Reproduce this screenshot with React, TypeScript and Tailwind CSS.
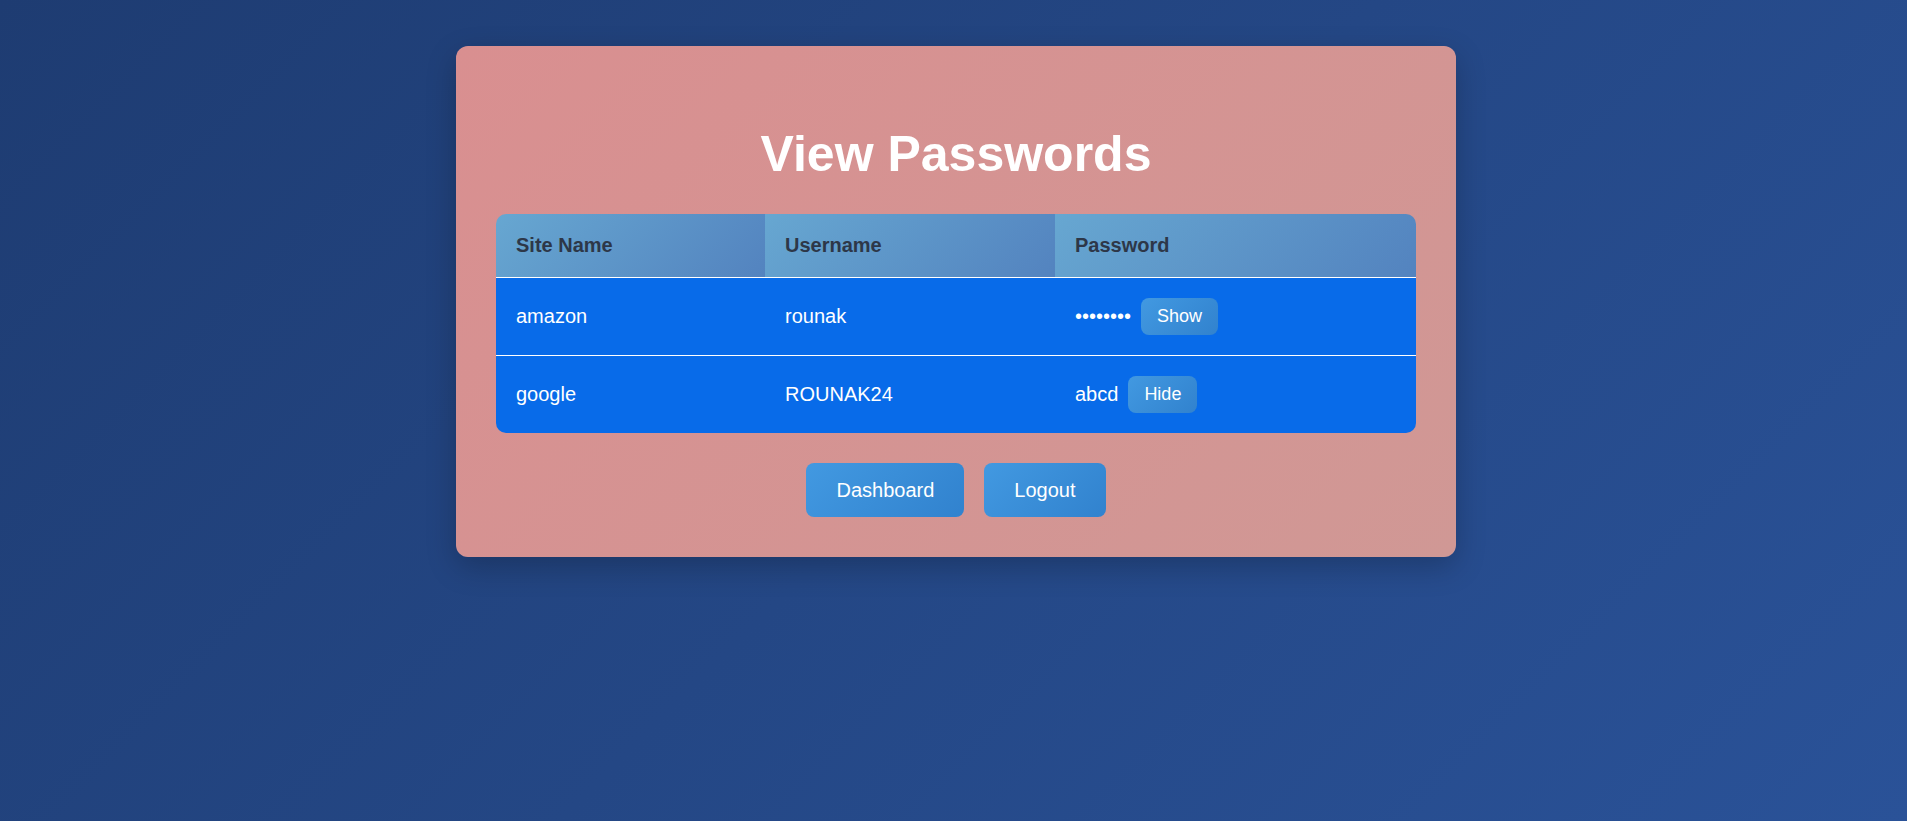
import { useState } from "react";

interface Entry {
  site: string;
  username: string;
  password: string;
}

const entries: Entry[] = [
  { site: "amazon", username: "rounak", password: "secret12" },
  { site: "google", username: "ROUNAK24", password: "abcd" },
];

export default function App() {
  const [visible, setVisible] = useState<Record<number, boolean>>({ 1: true });

  const toggle = (i: number) => setVisible((v) => ({ ...v, [i]: !v[i] }));

  return (
    <div
      className="min-h-screen w-full bg-linear-135 from-[#1e3c72] to-[#2a5298] pl-[5px] pt-[46px]"
      style={{ fontFamily: '"Liberation Sans", Arial, sans-serif' }}
    >
      <div className="mx-auto w-[1000px] rounded-xl bg-linear-135 from-[#d98f90] to-[#d09895] px-[40px] pt-[79px] pb-[40px] shadow-[0_10px_30px_rgba(0,0,0,0.22)]">
        <h1 className="mb-[31px] text-center text-[50px] leading-[58px] font-bold text-white">
          View Passwords
        </h1>

        <div className="overflow-hidden rounded-[10px]">
          <table className="w-full table-fixed border-collapse">
            <colgroup>
              <col className="w-[269px]" />
              <col className="w-[290px]" />
              <col className="w-[361px]" />
            </colgroup>
            <thead>
              <tr className="border-b border-white">
                {["Site Name", "Username", "Password"].map((h) => (
                  <th
                    key={h}
                    className="bg-linear-135 from-[#67a7d1] to-[#5383bf] px-5 py-5 text-left text-[20px] leading-[23px] font-bold text-[#2d3748]"
                  >
                    {h}
                  </th>
                ))}
              </tr>
            </thead>
            <tbody>
              {entries.map((e, i) => (
                <tr
                  key={e.site}
                  className="border-b border-white bg-[#086be9] text-[20px] leading-[23px] text-white last:border-b-0"
                >
                  <td className="px-5 py-5">{e.site}</td>
                  <td className="px-5 py-5">{e.username}</td>
                  <td className="px-5 py-5">
                    <div className="flex items-center">
                      <span>{visible[i] ? e.password : "••••••••"}</span>
                      <button
                        onClick={() => toggle(i)}
                        className="ml-[10px] h-[37px] rounded-lg bg-linear-135 from-[#4299e1] to-[#3182ce] px-4 text-[18px] text-white"
                      >
                        {visible[i] ? "Hide" : "Show"}
                      </button>
                    </div>
                  </td>
                </tr>
              ))}
            </tbody>
          </table>
        </div>

        <div className="mt-[30px] flex justify-center gap-5">
          <button className="h-[54px] rounded-lg bg-linear-135 from-[#4299e1] to-[#3182ce] px-[30px] text-[20px] text-white">
            Dashboard
          </button>
          <button className="h-[54px] rounded-lg bg-linear-135 from-[#4299e1] to-[#3182ce] px-[30px] text-[20px] text-white">
            Logout
          </button>
        </div>
      </div>
    </div>
  );
}
